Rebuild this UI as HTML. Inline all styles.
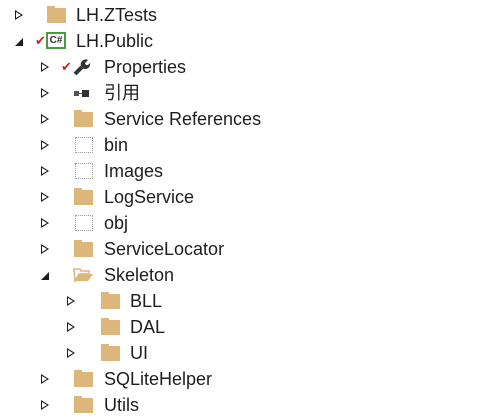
<!DOCTYPE html><html><head><style>
body{margin:0;width:494px;height:420px;background:#fff;font-family:"Liberation Sans","Noto Sans CJK SC",sans-serif;font-size:18px;color:#1e1e1e;position:relative;overflow:hidden}
.r{position:absolute;height:26px;line-height:26px;white-space:nowrap;left:0;width:494px}
.t{position:absolute;top:0}
.ar{position:absolute;top:8px;width:0;height:0}
.c{border-left:8px solid #1e1e1e;border-top:5px solid transparent;border-bottom:5px solid transparent}
.c::after{content:"";position:absolute;left:-7px;top:-3px;border-left:5px solid #fff;border-top:3px solid transparent;border-bottom:3px solid transparent}
.o{border-right:8px solid #1e1e1e;border-top:8px solid transparent;top:10px}
.f{position:absolute;top:6px;width:19px;height:15px;background:#dcb67a}
.f::before{content:"";position:absolute;left:0;top:-2px;width:8px;height:3px;background:#dcb67a}
.d{position:absolute;top:5px;width:18px;height:16px;border:1px dotted #999;box-sizing:border-box}
.chk{position:absolute;top:0;color:#d42020;font-size:13px}
</style></head><body>
<div class="r" style="top:2px"><div class="ar c" style="left:15px"></div><div class="f" style="left:47px"></div><span class="t" style="left:76px">LH.ZTests</span></div>
<div class="r" style="top:28px"><div class="ar o" style="left:15px"></div><span class="chk" style="left:35px">✔</span><div style="position:absolute;left:46px;top:4px;width:20px;height:17px;border:2px solid #4a9a44;box-sizing:border-box;font-size:10px;line-height:13px;text-align:center;font-weight:bold;color:#333">C#</div><span class="t" style="left:76px">LH.Public</span></div>
<div class="r" style="top:54px"><div class="ar c" style="left:41px"></div><span class="chk" style="left:61px">✔</span><svg style="position:absolute;left:73px;top:5px" width="18" height="17" viewBox="0 0 18 17"><path d="M2 15 L9 8" stroke="#333" stroke-width="4" fill="none"/><path d="M8 7 A5 5 0 0 1 15 1 L12 4 L13 6 L15 6 L17 4 A5 5 0 0 1 11 10 Z" fill="#333"/></svg><span class="t" style="left:104px">Properties</span></div>
<div class="r" style="top:80px"><div class="ar c" style="left:41px"></div><div style="position:absolute;left:74px;top:11px;width:5px;height:5px;background:#555"></div><div style="position:absolute;left:79px;top:13px;width:3px;height:1px;background:#555"></div><div style="position:absolute;left:82px;top:10px;width:7px;height:7px;background:#333"></div><span class="t" style="left:104px">引用</span></div>
<div class="r" style="top:106px"><div class="ar c" style="left:41px"></div><div class="f" style="left:74px"></div><span class="t" style="left:104px">Service References</span></div>
<div class="r" style="top:132px"><div class="ar c" style="left:41px"></div><div class="d" style="left:75px"></div><span class="t" style="left:104px">bin</span></div>
<div class="r" style="top:158px"><div class="ar c" style="left:41px"></div><div class="d" style="left:75px"></div><span class="t" style="left:104px">Images</span></div>
<div class="r" style="top:184px"><div class="ar c" style="left:41px"></div><div class="f" style="left:74px"></div><span class="t" style="left:104px">LogService</span></div>
<div class="r" style="top:210px"><div class="ar c" style="left:41px"></div><div class="d" style="left:75px"></div><span class="t" style="left:104px">obj</span></div>
<div class="r" style="top:236px"><div class="ar c" style="left:41px"></div><div class="f" style="left:74px"></div><span class="t" style="left:104px">ServiceLocator</span></div>
<div class="r" style="top:262px"><div class="ar o" style="left:41px"></div><svg style="position:absolute;left:73px;top:4px" width="21" height="17" viewBox="0 0 21 17"><path d="M1 3 L7 3 L8 5 L16 5 L16 8 L6 8 L2 15 Z" fill="none" stroke="#dcb67a" stroke-width="1.5"/><path d="M6 8 L20 8 L15 15 L2 15 Z" fill="#dcb67a"/></svg><span class="t" style="left:104px">Skeleton</span></div>
<div class="r" style="top:288px"><div class="ar c" style="left:67px"></div><div class="f" style="left:101px"></div><span class="t" style="left:130px">BLL</span></div>
<div class="r" style="top:314px"><div class="ar c" style="left:67px"></div><div class="f" style="left:101px"></div><span class="t" style="left:130px">DAL</span></div>
<div class="r" style="top:340px"><div class="ar c" style="left:67px"></div><div class="f" style="left:101px"></div><span class="t" style="left:130px">UI</span></div>
<div class="r" style="top:366px"><div class="ar c" style="left:41px"></div><div class="f" style="left:74px"></div><span class="t" style="left:104px">SQLiteHelper</span></div>
<div class="r" style="top:392px"><div class="ar c" style="left:41px"></div><div class="f" style="left:74px"></div><span class="t" style="left:104px">Utils</span></div>
</body></html>
